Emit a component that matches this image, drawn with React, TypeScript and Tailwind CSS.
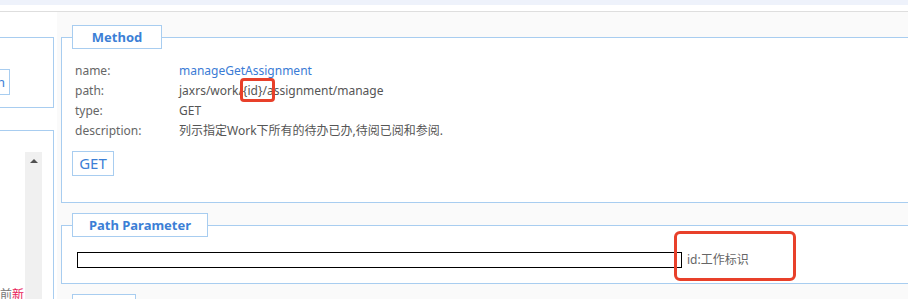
import React from 'react';

const rows: { label: string; value: string; link?: boolean }[] = [
  { label: 'name:', value: 'manageGetAssignment', link: true },
  { label: 'path:', value: 'jaxrs/work/{id}/assignment/manage' },
  { label: 'type:', value: 'GET' },
  { label: 'description:', value: '列示指定Work下所有的待办已办,待阅已阅和参阅.' },
];

const Legend = ({ width, children }: { width: string; children?: React.ReactNode }) => (
  <legend className={`${width} h-[24px] border border-[#a8cdf0] bg-white`}>
    <div className="flex justify-center text-[13px] font-bold leading-[22px] text-[#3c7fd6]">{children}</div>
  </legend>
);

const LeftPanel = () => (
  <div className="w-[57px] flex-none flex flex-col bg-white pt-[25px] overflow-hidden">
    <div className="w-[54px] h-[71px] flex-none border-t border-r border-b border-[#a8cdf0] pt-[31px]">
      <div className="-ml-[30px] w-[40px] h-[26px] border border-[#a8cdf0] text-right pr-[4px] text-[13px] leading-[24px] text-[#3c7fd6]">
        n
      </div>
    </div>
    <div className="w-[54px] flex-1 mt-[22px] border-t border-r border-[#a8cdf0] flex">
      <div className="w-[25px] pt-[156px] whitespace-nowrap text-[12px] leading-[16px]">
        <span className="text-[#777]">前</span>
        <span className="text-[#e8205a]">新</span>
      </div>
      <div className="w-[17px] mt-[21px] bg-[#f0f0f0] flex justify-center pt-[7px]">
        <div className="w-0 h-0 border-l-[4px] border-r-[4px] border-b-[4px] border-l-transparent border-r-transparent border-b-[#505050]" />
      </div>
    </div>
  </div>
);

export default function App() {
  return (
    <div className="relative w-[908px] h-[299px] overflow-hidden bg-white font-['Noto_Sans','Noto_Sans_CJK_SC',sans-serif] text-[12px] text-[#666]">
      <div className="h-[5px] bg-[#eef2fb]" />
      <div className="h-[6px] bg-white" />
      <div className="h-px bg-[#dedede]" />
      <div className="flex h-[287px]">
        <LeftPanel />
        <main className="flex-1 overflow-hidden bg-[#fafafa] pl-[4px] pt-[13px]">
          <fieldset className="w-[900px] border border-[#a8cdf0] bg-white pl-[10px] pb-[26px]">
            <Legend width="w-[90px]">Method</Legend>
            <div className="mt-[12px] pl-[3px]">
              {rows.map((r) => (
                <div key={r.label} className="flex h-[20px] leading-[20px]">
                  <span className="w-[104px] flex-none text-[#666]">{r.label}</span>
                  <span className={r.link ? 'text-[#3a7bd5]' : 'text-[#555]'}>{r.value}</span>
                </div>
              ))}
            </div>
            <button className="mt-[10px] w-[42px] h-[25px] border border-[#a8cdf0] bg-white text-[15px] leading-[23px] text-[#3c7fd6]">
              GET
            </button>
          </fieldset>

          <fieldset className="mt-[10px] w-[900px] border border-[#a8cdf0] bg-white pl-[10px] pb-[15px]">
            <Legend width="w-[136px]">Path Parameter</Legend>
            <div className="mt-[15px] pl-[5px] flex items-center gap-[5px]">
              <input className="w-[605px] h-[16px] border border-black bg-white outline-none" />
              <span className="text-[#666] leading-[16px]">id:工作标识</span>
            </div>
          </fieldset>

          <fieldset className="mt-[10px] w-[900px] border border-[#a8cdf0] bg-white pl-[10px] h-[60px]">
            <Legend width="w-[64px]" />
          </fieldset>
        </main>
      </div>

      {/* annotation boxes */}
      <div className="absolute left-[240px] top-[78px] w-[35px] h-[24px] border-[3px] border-[#e8402a] rounded-[4px]" />
      <div className="absolute left-[674px] top-[231px] w-[122px] h-[50px] border-[3px] border-[#e8402a] rounded-[6px]" />
    </div>
  );
}
